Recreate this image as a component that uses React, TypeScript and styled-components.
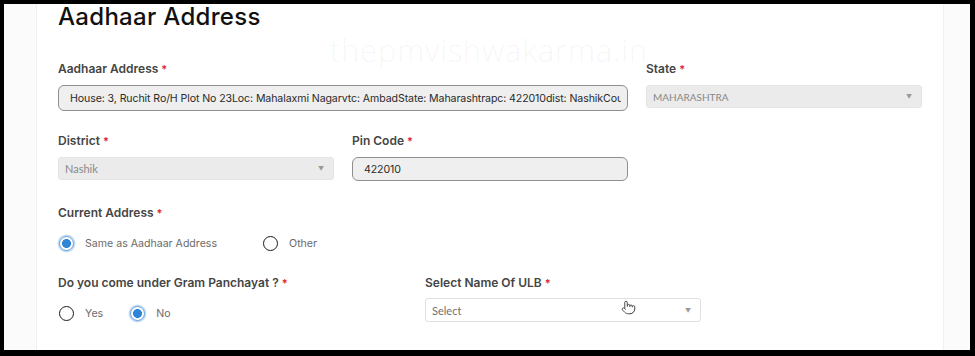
import React from 'react';
import styled, { createGlobalStyle } from 'styled-components';
import { Pointer } from 'lucide-react';

const GlobalStyle = createGlobalStyle`
    html, body {
        margin: 0;
        padding: 0;
        background: #000;
    }
    * {
        box-sizing: border-box;
    }
`;

const ADDRESS = 'House: 3, Ruchit Ro/H Plot No 23Loc: Mahalaxmi Nagarvtc: AmbadState: Maharashtrapc: 422010dist: NashikCountry: India';

const Radio = ({ checked, label }: { checked?: boolean; label: string }) => {
    return (
        <RadioItem>
            <RadioCircle $checked={checked} />
            <RadioLabel>{label}</RadioLabel>
        </RadioItem>
    );
};

const App = () => {
    return (
        <>
            <GlobalStyle />
            <Frame>
                <Page>
                    <Card>
                        <Watermark>thepmvishwakarma.in</Watermark>
                        <Heading>Aadhaar Address</Heading>

                        <FieldGrid>
                            <Field $span={2}>
                                <Label>Aadhaar Address <Star>*</Star></Label>
                                <TextInput readOnly value={ADDRESS} />
                            </Field>
                            <Field>
                                <Label>State <Star>*</Star></Label>
                                <SelectBox $disabled>
                                    <SelectText $upper>MAHARASHTRA</SelectText>
                                    <Arrow>▼</Arrow>
                                </SelectBox>
                            </Field>
                        </FieldGrid>

                        <FieldGrid $top={22}>
                            <Field>
                                <Label>District <Star>*</Star></Label>
                                <SelectBox $disabled>
                                    <SelectText>Nashik</SelectText>
                                    <Arrow>▼</Arrow>
                                </SelectBox>
                            </Field>
                            <Field>
                                <Label>Pin Code <Star>*</Star></Label>
                                <TextInput readOnly value="422010" $height={24} />
                            </Field>
                        </FieldGrid>

                        <Section $top={24}>
                            <Label>Current Address <Star>*</Star></Label>
                            <RadioGroup $gap={46}>
                                <Radio checked label="Same as Aadhaar Address" />
                                <Radio label="Other" />
                            </RadioGroup>
                        </Section>

                        <SplitRow>
                            <Section $top={0} $width={367}>
                                <Label>Do you come under Gram Panchayat ? <Star>*</Star></Label>
                                <RadioGroup $gap={27}>
                                    <Radio label="Yes" />
                                    <Radio checked label="No" />
                                </RadioGroup>
                            </Section>
                            <Field $width={276} $gap={7}>
                                <Label>Select Name Of ULB <Star>*</Star></Label>
                                <SelectBox $height={24}>
                                    <SelectText $placeholder>Select</SelectText>
                                    <Arrow>▼</Arrow>
                                    <Cursor>
                                        <Pointer size={15} strokeWidth={1.4} color="#333" fill="#fff" />
                                    </Cursor>
                                </SelectBox>
                            </Field>
                        </SplitRow>
                    </Card>
                </Page>
            </Frame>
        </>
    );
};

const Frame = styled.div`
    width: 975px;
    height: 356px;
    padding: 4px 5px 6px 4px;
    background: #000;
    overflow: hidden;
`;

const Page = styled.div`
    height: 100%;
    background: #fbfbfb;
    padding-left: 32px;
    padding-right: 26px;
`;

const Card = styled.div`
    position: relative;
    height: 100%;
    background: #fff;
    border-left: 1px solid #efefef;
    border-right: 1px solid #f1f1f1;
    padding-left: 21px;
    font-family: "Inter", "Noto Sans", sans-serif;
`;

const Watermark = styled.div`
    position: absolute;
    left: 293px;
    top: 28px;
    font-family: "Open Sans", sans-serif;
    font-weight: 300;
    font-size: 31px;
    line-height: 36px;
    letter-spacing: 0.7px;
    color: rgba(0, 0, 0, 0.05);
    pointer-events: none;
`;

const Heading = styled.h2`
    margin: 0;
    font-size: 24px;
    line-height: 25px;
    font-weight: 500;
    color: #111;
    letter-spacing: 0.3px;
`;

const FieldGrid = styled.div<{ $top?: number }>`
    display: grid;
    grid-template-columns: repeat(3, 276px);
    column-gap: 18px;
    margin-top: ${({ $top }) => $top ?? 32}px;
`;

const Field = styled.div<{ $span?: number; $width?: number; $gap?: number }>`
    display: flex;
    flex-direction: column;
    gap: ${({ $gap }) => $gap ?? 8}px;
    grid-column: span ${({ $span }) => $span ?? 1};
    ${({ $width }) => ($width ? `width: ${$width}px;` : '')}
`;

const Section = styled.div<{ $top?: number; $width?: number }>`
    display: flex;
    flex-direction: column;
    gap: 12px;
    margin-top: ${({ $top }) => $top ?? 0}px;
    ${({ $width }) => ($width ? `width: ${$width}px; flex-shrink: 0;` : '')}
`;

const SplitRow = styled.div`
    display: flex;
    margin-top: 22px;
`;

const Label = styled.div`
    font-size: 12px;
    line-height: 16px;
    font-weight: 600;
    color: #454545;
    white-space: nowrap;
`;

const Star = styled.span`
    color: #e0252b;
    font-size: 11px;
`;

const TextInput = styled.input<{ $height?: number }>`
    width: 100%;
    height: ${({ $height }) => $height ?? 26}px;
    padding: 0 6px 0 11px;
    border: 1px solid #8f8f8f;
    border-radius: 6px;
    background: #efefef;
    font-family: "Inter", "Noto Sans", sans-serif;
    font-size: 10.6px;
    letter-spacing: -0.1px;
    color: #2b2b2b;
    outline: none;
`;

const SelectBox = styled.div<{ $disabled?: boolean; $height?: number }>`
    position: relative;
    display: flex;
    align-items: center;
    justify-content: space-between;
    height: ${({ $height }) => $height ?? 23}px;
    padding: 0 9px 0 6px;
    border: 1px solid ${({ $disabled }) => ($disabled ? '#e4e4e4' : '#e0e0e0')};
    border-radius: 3px;
    background: ${({ $disabled }) => ($disabled ? '#ebebeb' : '#fff')};
`;

const SelectText = styled.span<{ $upper?: boolean; $placeholder?: boolean }>`
    font-family: "Lato", "Liberation Sans", sans-serif;
    font-size: ${({ $upper }) => ($upper ? 10 : 11)}px;
    color: ${({ $placeholder }) => ($placeholder ? '#6f6f6f' : '#888')};
`;

const Arrow = styled.span`
    font-size: 6px;
    color: #999;
`;

const Cursor = styled.span`
    position: absolute;
    left: 195px;
    top: 1px;
    display: flex;
`;

const RadioGroup = styled.div<{ $gap: number }>`
    display: flex;
    align-items: center;
    gap: ${({ $gap }) => $gap}px;
    padding-left: 1px;
    height: 20px;
`;

const RadioItem = styled.label`
    display: flex;
    align-items: center;
    gap: 11px;
`;

const RadioCircle = styled.span<{ $checked?: boolean }>`
    width: 15px;
    height: 15px;
    border-radius: 50%;
    flex-shrink: 0;
    ${({ $checked }) =>
        $checked
            ? `
        border: 1.5px solid #5b9bd9;
        background: radial-gradient(circle, #2f86d6 0 4.2px, #fff 4.7px);
        box-shadow: 0 0 0 1.5px rgba(91, 155, 217, 0.35);
    `
            : `
        border: 1.5px solid #1a1a1a;
        background: #fff;
    `}
`;

const RadioLabel = styled.span`
    font-size: 10.6px;
    color: #6b6b6b;
    white-space: nowrap;
`;

export default App;
